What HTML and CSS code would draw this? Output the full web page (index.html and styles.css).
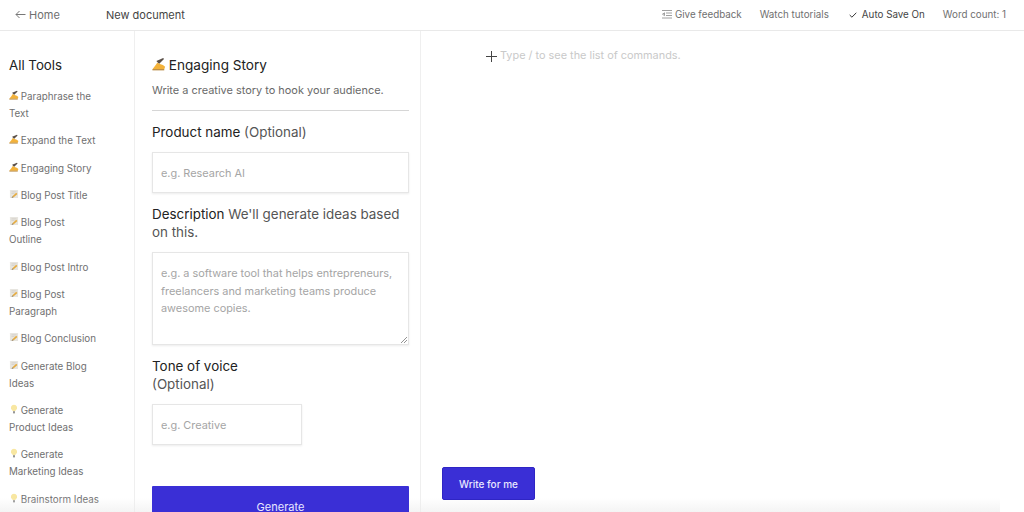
FILE: index.html
```html
<!DOCTYPE html>
<html lang="en">
<head>
<meta charset="utf-8">
<title>New document</title>
<link rel="stylesheet" href="styles.css">
</head>
<body>
<svg class="defs" width="0" height="0" aria-hidden="true">
  <symbol id="write" viewBox="0 0 16 16">
    <path d="M5 4.500 12.800 1l.9 1.200L8 8z" fill="#5a5048"/>
    <path d="M.5 14 4 9.500 6 6.500l3 1.500 3.500 1.200 2.500 2-1 2.800z" fill="#f3b23a"/>
    <path d="M.5 14.600h13.500" stroke="#a8701a" stroke-width="1.200"/>
  </symbol>
  <symbol id="memo" viewBox="0 0 16 16">
    <rect x="1.500" y="1.500" width="13" height="13" rx="1" fill="#e7e5df"/>
    <path d="M4 4.500h8M4 7h5" stroke="#cdc9c0"/>
    <path d="M5.500 11.500 11.500 6l2 1.800-6 5.400z" fill="#e6ab3f"/>
    <path d="M4 14.500l1.500-3 2 1.700z" fill="#8d7550"/>
  </symbol>
  <symbol id="bulb" viewBox="0 0 16 16">
    <path d="M8 1a5 5 0 0 0-3 9l1.500 1.500h3L11 10A5 5 0 0 0 8 1z" fill="#f8e7a2"/>
    <rect x="6.500" y="11.500" width="3" height="3.500" fill="#8f8f8f"/>
  </symbol>
</svg>

<header class="topbar">
  <div class="top-left">
    <a class="home">
      <svg class="arrow" width="11" height="9" viewBox="0 0 11 9"><path d="M10.500 4.500H1M4.500 1 1 4.500 4.500 8" fill="none" stroke="#777" stroke-width="1"/></svg>
      Home
    </a>
    <span class="doc-title">New document</span>
  </div>
  <div class="top-right">
    <span class="top-item feedback">
      <svg width="10" height="9" viewBox="0 0 10 9"><path d="M0 .5h10M4 3h6M4 5.500h6M0 8h10M2.500 2.800.5 4.200l2 1.400z" fill="none" stroke="#888" stroke-width=".8"/></svg>
      Give feedback
    </span>
    <span class="top-item">Watch tutorials</span>
    <span class="top-item autosave">
      <svg width="8" height="6" viewBox="0 0 8 6"><path d="M.7 3l2.200 2.200L7.300.8" fill="none" stroke="#333" stroke-width="1"/></svg>
      Auto Save On
    </span>
    <span class="top-item">Word count: 1</span>
  </div>
</header>

<main class="workspace">
  <nav class="tools">
    <h2 class="tools-title">All Tools</h2>
    <ul class="tool-list">
      <li><svg class="emoji"><use href="#write"/></svg> Paraphrase the Text</li>
      <li><svg class="emoji"><use href="#write"/></svg> Expand the Text</li>
      <li><svg class="emoji"><use href="#write"/></svg> Engaging Story</li>
      <li><svg class="emoji"><use href="#memo"/></svg> Blog Post Title</li>
      <li><svg class="emoji"><use href="#memo"/></svg> Blog Post Outline</li>
      <li><svg class="emoji"><use href="#memo"/></svg> Blog Post Intro</li>
      <li><svg class="emoji"><use href="#memo"/></svg> Blog Post Paragraph</li>
      <li><svg class="emoji"><use href="#memo"/></svg> Blog Conclusion</li>
      <li><svg class="emoji"><use href="#memo"/></svg> Generate Blog Ideas</li>
      <li><svg class="emoji"><use href="#bulb"/></svg> Generate Product Ideas</li>
      <li><svg class="emoji"><use href="#bulb"/></svg> Generate Marketing Ideas</li>
      <li><svg class="emoji"><use href="#bulb"/></svg> Brainstorm Ideas</li>
    </ul>
  </nav>

  <section class="form-panel">
    <h1 class="form-title"><svg class="emoji-lg"><use href="#write"/></svg> Engaging Story</h1>
    <p class="form-sub">Write a creative story to hook your audience.</p>
    <hr class="rule">
    <label class="field-label">Product name <span class="muted">(Optional)</span></label>
    <div class="input input-name">e.g. Research AI</div>
    <label class="field-label label-desc">Description <span class="muted">We'll generate ideas based on this.</span></label>
    <div class="input textarea">e.g. a software tool that helps entrepreneurs, freelancers and marketing teams produce awesome copies.
      <svg class="grip" width="7" height="7" viewBox="0 0 7 7"><path d="M1 7 7 1M4 7l3-3" stroke="#777" stroke-width=".8"/></svg>
    </div>
    <label class="field-label label-tone">Tone of voice<br><span class="muted">(Optional)</span></label>
    <div class="input input-tone">e.g. Creative</div>
    <button class="generate">Generate</button>
  </section>

  <section class="editor">
    <div class="command-line">
      <svg class="plus" width="11" height="11" viewBox="0 0 11 11"><path d="M5.500 0v11M0 5.500h11" stroke="#444" stroke-width="1"/></svg>
      <span class="placeholder">Type / to see the list of commands.</span>
    </div>
    <button class="write-btn">Write for me</button>
  </section>
</main>
<div class="bottom-fade"></div>
</body>
</html>
```

FILE: styles.css
```css
* { box-sizing: border-box; }
html, body { height: 100%; overflow: hidden; }
body { margin: 0; background: #fff; font-family: Inter, "Liberation Sans", sans-serif; color: #666; }
.defs { position: absolute; }

.topbar { height: 31px; display: flex; justify-content: space-between; align-items: center; padding: 0 18px 1px 15px; border-bottom: 1px solid #e9e9e9; font-size: 11px; }
.top-left { display: flex; align-items: center; }
.home { display: flex; align-items: center; gap: 3px; width: 91px; color: #6f6f6f; }
.doc-title { color: #444; }
.top-right { display: flex; gap: 18px; color: #707070; font-size: 9.800px; }
.top-item { display: flex; align-items: center; gap: 3px; }
.autosave { color: #444; margin-left: 2px; gap: 5px; }

.workspace { display: flex; height: 481px; }
.tools { width: 135px; flex: none; padding: 26px 34px 0 9px; border-right: 1px solid #efefef; overflow: hidden; }
.tools-title { margin: 0 0 15px; font-size: 13.300px; line-height: 16px; font-weight: 400; color: #222; }
.tool-list { list-style: none; margin: 0; padding: 0; font-size: 9.800px; line-height: 17px; color: #707070; }
.tool-list li { margin-bottom: 10.350px; }
.emoji { width: 10px; height: 10px; margin-right: -1px; vertical-align: 0; }

.form-panel { width: 286px; flex: none; padding: 25px 11px 0 17px; border-right: 1px solid #efefef; overflow: hidden; }
.form-title { margin: 0; height: 18px; font-size: 13.600px; line-height: 18px; font-weight: 400; color: #222; }
.emoji-lg { width: 14px; height: 14px; margin-right: -1px; vertical-align: -1px; }
.form-sub { margin: 7px 0 0; font-size: 10.950px; line-height: 18px; color: #6a6a6a; }
.rule { margin: 11px 0 0; border: 0; border-top: 1px solid #d6d6d6; }
.field-label { display: block; font-size: 13.400px; line-height: 18px; color: #222; }
.field-label:first-of-type { margin-top: 12px; }
.muted { color: #555; }
.input { position: relative; border: 1px solid #e6e6e6; box-shadow: 0 1px 2px rgba(0,0,0,.08); background: #fff; font-size: 10.900px; line-height: 17.500px; color: #a5a5a5; padding: 12px 8px; }
.input-name { margin-top: 11px; height: 41px; }
.label-desc { margin-top: 12px; }
.textarea { margin-top: 11px; height: 93px; }
.grip { position: absolute; right: 1px; bottom: 1px; }
.label-tone { margin-top: 12px; }
.input-tone { margin-top: 11px; width: 150px; height: 41px; }
.generate { position: relative; z-index: 1; display: block; width: 100%; height: 42px; margin-top: 41px; border: 0; border-radius: 1px; padding: 0; background: #3a2fd6; color: #e9e7ff; font: 11px Inter, "Liberation Sans", sans-serif; }

.editor { flex: 1; display: flex; flex-direction: column; justify-content: space-between; padding: 16px 0 12px 21px; }
.command-line { display: flex; align-items: center; gap: 3px; padding-left: 44px; margin-top: 1px; }
.plus { margin-top: 3px; }
.placeholder { font-size: 10.900px; color: #c9c9c9; }
.write-btn { position: relative; z-index: 1; width: 93px; height: 33px; border: 1px solid #2f25c4; border-radius: 2px; background: #3a2fd6; color: #e9e7ff; font: 500 10px Inter, "Liberation Sans", sans-serif; }

.bottom-fade { position: absolute; left: 0; right: 24px; bottom: 0; height: 14px; background: linear-gradient(to bottom, rgba(235,235,235,0), rgba(235,235,235,.55)); pointer-events: none; }
```
